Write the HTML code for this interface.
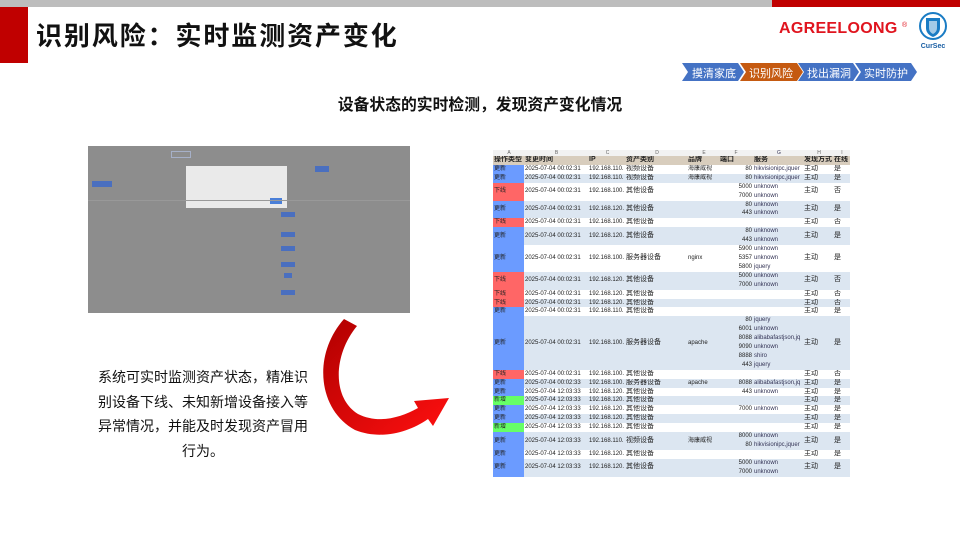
<!DOCTYPE html>
<html><head><meta charset="utf-8"><style>
*{margin:0;padding:0;box-sizing:border-box}
body{width:960px;height:540px;overflow:hidden;background:#fff;position:relative;font-family:"Liberation Sans","Noto Sans CJK SC",sans-serif}
.abs{position:absolute}
.tbl{position:absolute;left:493px;top:150px;width:357px;font-size:6px;line-height:8.9px;color:#222}
.r{display:flex;width:357px}
.r>div{overflow:hidden;white-space:nowrap;display:flex;flex-direction:column;justify-content:center;line-height:8.9px}
.c1{width:31px;padding-left:1px}.c2{width:64px;padding-left:1px}.c3{width:38px;padding-left:1px}.c4{width:62px;font-size:7px}.c5{width:32px}.c6{width:32px;text-align:right;align-items:flex-end}.c7{width:52px;padding-left:2px;color:#335}.c8{width:30px;font-size:7px}.c9{width:16px;font-size:7px}
.alt{background:#dce6f1}
.u{background:#6b9bff}.x{background:#ff6666}.n{background:#66ff66}
</style></head><body>
<div class="abs" style="left:0;top:0;width:772px;height:7px;background:#bdbdbd"></div>
<div class="abs" style="left:772px;top:0;width:188px;height:7px;background:#c00000"></div>
<div class="abs" style="left:0;top:7px;width:28px;height:56px;background:#c00000"></div>
<div class="abs" style="left:36px;top:18px;font-size:26px;letter-spacing:1.9px;font-weight:bold;color:#111;line-height:36px">识别风险：实时监测资产变化</div>
<div class="abs" style="left:779px;top:20px;font-size:16px;font-weight:bold;color:#e0141e;letter-spacing:0.3px">AGREELOONG</div>
<div class="abs" style="left:902px;top:22px;font-size:7px;color:#e0141e">®</div>
<svg class="abs" style="left:918px;top:11px" width="32" height="40" viewBox="0 0 32 40">
<circle cx="15" cy="15" r="13" fill="none" stroke="#1a7cc4" stroke-width="2"/>
<path d="M8,7 L22,7 L22,17 Q22,23 15,26 Q8,23 8,17 Z" fill="#1a7cc4"/>
<path d="M11,10 L19,10 L19,17 Q19,21 15,23 Q11,21 11,17 Z" fill="#fff" opacity=".6"/>
<text x="15" y="37" font-size="7" font-weight="bold" fill="#1a5fa4" text-anchor="middle" font-family="Liberation Sans">CurSec</text>
</svg>
<svg class="abs" style="left:680px;top:62px" width="240" height="20">
<polygon points="2,1 58,1 64,10 58,19 2,19 8,10" fill="#4472c4"/>
<polygon points="60,1 117,1 123,10 117,19 60,19 66,10" fill="#c55a11"/>
<polygon points="118,1 173,1 179,10 173,19 118,19 124,10" fill="#4472c4"/>
<polygon points="175,1 231,1 237,10 231,19 175,19 181,10" fill="#4472c4"/>
<g font-size="11" fill="#fff" font-family="Liberation Sans,Noto Sans CJK SC,sans-serif">
<text x="12" y="15">摸清家底</text><text x="69" y="15">识别风险</text><text x="127" y="15">找出漏洞</text><text x="184" y="15">实时防护</text></g>
</svg>
<div class="abs" style="left:0;width:960px;top:92px;text-align:center;font-size:15.8px;font-weight:bold;color:#111">设备状态的实时检测，发现资产变化情况</div>

<div class="abs" style="left:88px;top:146px;width:322px;height:167px;background:#8d8d8d"></div>
<div class="abs" style="left:93px;top:151px;width:310px;height:8px;">
<span class="abs" style="left:78px;top:0;width:20px;height:7px;border:1px solid #a6b0c8"></span></div>
<div class="abs" style="left:92px;top:181px;width:20px;height:6px;background:#4a6fbf"></div>
<div class="abs" style="left:315px;top:166px;width:14px;height:6px;background:#4a6fbf"></div>
<div class="abs" style="left:186px;top:166px;width:101px;height:42px;background:#eaeaea"></div>
<div class="abs" style="left:270px;top:198px;width:12px;height:6px;background:#4a7fd8"></div>
<div class="abs" style="left:88px;top:200px;width:322px;height:1px;background:#999"></div>
<div class="abs" style="left:281px;top:212px;width:14px;height:5px;background:#4a6fbf"></div>
<div class="abs" style="left:281px;top:232px;width:14px;height:5px;background:#4a6fbf"></div>
<div class="abs" style="left:281px;top:246px;width:14px;height:5px;background:#4a6fbf"></div>
<div class="abs" style="left:281px;top:262px;width:14px;height:5px;background:#4a6fbf"></div>
<div class="abs" style="left:284px;top:273px;width:8px;height:5px;background:#4a6fbf"></div>
<div class="abs" style="left:281px;top:290px;width:14px;height:5px;background:#4a6fbf"></div>

<svg class="abs" style="left:0;top:0" width="960" height="540">
<defs><linearGradient id="g" x1="0" y1="0" x2="1" y2="1"><stop offset="0" stop-color="#b00000"/><stop offset="1" stop-color="#ff1010"/></linearGradient></defs>
<path d="M344,319 L357,326 C333,355 332,398 358,414 C378,424 400,418 418,408 L414,401 L449,398 L433,426 L428,419 C408,433 380,440 355,430 C318,410 312,355 344,319 Z" fill="url(#g)"/>
</svg>
<div class="abs" style="left:96px;top:365px;width:214px;text-align:center;font-size:14px;line-height:24.5px;color:#111">系统可实时监测资产状态，精准识别设备下线、未知新增设备接入等异常情况，并能及时发现资产冒用行为。</div>

<div class="tbl">
<div class="r" style="font-size:5px;color:#666;text-align:center;background:#f2f2f2"><div class="c1" style="line-height:6px">A</div><div class="c2" style="line-height:6px">B</div><div class="c3" style="line-height:6px">C</div><div class="c4" style="font-size:5px;line-height:6px">D</div><div class="c5" style="line-height:6px">E</div><div class="c6" style="align-items:center;line-height:6px">F</div><div class="c7" style="line-height:6px">G</div><div class="c8" style="font-size:5px;line-height:6px">H</div><div class="c9" style="font-size:5px;line-height:6px">I</div></div>
<div class="r" style="background:#d8cdbd;font-weight:bold;font-size:7px"><div class="c1">操作类型</div><div class="c2">变更时间</div><div class="c3">IP</div><div class="c4">资产类别</div><div class="c5">品牌</div><div class="c6" style="text-align:left;align-items:flex-start">端口</div><div class="c7" style="color:#222">服务</div><div class="c8">发现方式</div><div class="c9">在线</div></div>
<div class="r"><div class="c1 u">更新</div><div class="c2">2025-07-04 00:02:31</div><div class="c3">192.168.110.</div><div class="c4">视频设备</div><div class="c5">海康威视</div><div class="c6">80</div><div class="c7">hikvisionipc,jquer</div><div class="c8">主动</div><div class="c9">是</div></div>
<div class="r alt"><div class="c1 u">更新</div><div class="c2">2025-07-04 00:02:31</div><div class="c3">192.168.110.</div><div class="c4">视频设备</div><div class="c5">海康威视</div><div class="c6">80</div><div class="c7">hikvisionipc,jquer</div><div class="c8">主动</div><div class="c9">是</div></div>
<div class="r"><div class="c1 x">下线</div><div class="c2">2025-07-04 00:02:31</div><div class="c3">192.168.100.</div><div class="c4">其他设备</div><div class="c5"></div><div class="c6">5000<br>7000</div><div class="c7">unknown<br>unknown</div><div class="c8">主动</div><div class="c9">否</div></div>
<div class="r alt"><div class="c1 u">更新</div><div class="c2">2025-07-04 00:02:31</div><div class="c3">192.168.120.</div><div class="c4">其他设备</div><div class="c5"></div><div class="c6">80<br>443</div><div class="c7">unknown<br>unknown</div><div class="c8">主动</div><div class="c9">是</div></div>
<div class="r"><div class="c1 x">下线</div><div class="c2">2025-07-04 00:02:31</div><div class="c3">192.168.100.</div><div class="c4">其他设备</div><div class="c5"></div><div class="c6"></div><div class="c7"></div><div class="c8">主动</div><div class="c9">否</div></div>
<div class="r alt"><div class="c1 u">更新</div><div class="c2">2025-07-04 00:02:31</div><div class="c3">192.168.120.</div><div class="c4">其他设备</div><div class="c5"></div><div class="c6">80<br>443</div><div class="c7">unknown<br>unknown</div><div class="c8">主动</div><div class="c9">是</div></div>
<div class="r"><div class="c1 u">更新</div><div class="c2">2025-07-04 00:02:31</div><div class="c3">192.168.100.</div><div class="c4">服务器设备</div><div class="c5">nginx</div><div class="c6">5900<br>5357<br>5800</div><div class="c7">unknown<br>unknown<br>jquery</div><div class="c8">主动</div><div class="c9">是</div></div>
<div class="r alt"><div class="c1 x">下线</div><div class="c2">2025-07-04 00:02:31</div><div class="c3">192.168.120.</div><div class="c4">其他设备</div><div class="c5"></div><div class="c6">5000<br>7000</div><div class="c7">unknown<br>unknown</div><div class="c8">主动</div><div class="c9">否</div></div>
<div class="r"><div class="c1 x">下线</div><div class="c2">2025-07-04 00:02:31</div><div class="c3">192.168.120.</div><div class="c4">其他设备</div><div class="c5"></div><div class="c6"></div><div class="c7"></div><div class="c8">主动</div><div class="c9">否</div></div>
<div class="r alt"><div class="c1 x">下线</div><div class="c2">2025-07-04 00:02:31</div><div class="c3">192.168.120.</div><div class="c4">其他设备</div><div class="c5"></div><div class="c6"></div><div class="c7"></div><div class="c8">主动</div><div class="c9">否</div></div>
<div class="r"><div class="c1 u">更新</div><div class="c2">2025-07-04 00:02:31</div><div class="c3">192.168.110.</div><div class="c4">其他设备</div><div class="c5"></div><div class="c6"></div><div class="c7"></div><div class="c8">主动</div><div class="c9">是</div></div>
<div class="r alt"><div class="c1 u">更新</div><div class="c2">2025-07-04 00:02:31</div><div class="c3">192.168.100.</div><div class="c4">服务器设备</div><div class="c5">apache</div><div class="c6">80<br>6001<br>8088<br>9090<br>8888<br>443</div><div class="c7">jquery<br>unknown<br>alibabafastjson,jq<br>unknown<br>shiro<br>jquery</div><div class="c8">主动</div><div class="c9">是</div></div>
<div class="r"><div class="c1 x">下线</div><div class="c2">2025-07-04 00:02:31</div><div class="c3">192.168.100.</div><div class="c4">其他设备</div><div class="c5"></div><div class="c6"></div><div class="c7"></div><div class="c8">主动</div><div class="c9">否</div></div>
<div class="r alt"><div class="c1 u">更新</div><div class="c2">2025-07-04 00:02:33</div><div class="c3">192.168.100.</div><div class="c4">服务器设备</div><div class="c5">apache</div><div class="c6">8088</div><div class="c7">alibabafastjson,jq</div><div class="c8">主动</div><div class="c9">是</div></div>
<div class="r"><div class="c1 u">更新</div><div class="c2">2025-07-04 12:03:33</div><div class="c3">192.168.120.</div><div class="c4">其他设备</div><div class="c5"></div><div class="c6">443</div><div class="c7">unknown</div><div class="c8">主动</div><div class="c9">是</div></div>
<div class="r alt"><div class="c1 n">新增</div><div class="c2">2025-07-04 12:03:33</div><div class="c3">192.168.120.</div><div class="c4">其他设备</div><div class="c5"></div><div class="c6"></div><div class="c7"></div><div class="c8">主动</div><div class="c9">是</div></div>
<div class="r"><div class="c1 u">更新</div><div class="c2">2025-07-04 12:03:33</div><div class="c3">192.168.120.</div><div class="c4">其他设备</div><div class="c5"></div><div class="c6">7000</div><div class="c7">unknown</div><div class="c8">主动</div><div class="c9">是</div></div>
<div class="r alt"><div class="c1 u">更新</div><div class="c2">2025-07-04 12:03:33</div><div class="c3">192.168.120.</div><div class="c4">其他设备</div><div class="c5"></div><div class="c6"></div><div class="c7"></div><div class="c8">主动</div><div class="c9">是</div></div>
<div class="r"><div class="c1 n">新增</div><div class="c2">2025-07-04 12:03:33</div><div class="c3">192.168.120.</div><div class="c4">其他设备</div><div class="c5"></div><div class="c6"></div><div class="c7"></div><div class="c8">主动</div><div class="c9">是</div></div>
<div class="r alt"><div class="c1 u">更新</div><div class="c2">2025-07-04 12:03:33</div><div class="c3">192.168.110.</div><div class="c4">视频设备</div><div class="c5">海康威视</div><div class="c6">8000<br>80</div><div class="c7">unknown<br>hikvisionipc,jquer</div><div class="c8">主动</div><div class="c9">是</div></div>
<div class="r"><div class="c1 u">更新</div><div class="c2">2025-07-04 12:03:33</div><div class="c3">192.168.120.</div><div class="c4">其他设备</div><div class="c5"></div><div class="c6"></div><div class="c7"></div><div class="c8">主动</div><div class="c9">是</div></div>
<div class="r alt"><div class="c1 u">更新</div><div class="c2">2025-07-04 12:03:33</div><div class="c3">192.168.120.</div><div class="c4">其他设备</div><div class="c5"></div><div class="c6">5000<br>7000</div><div class="c7">unknown<br>unknown</div><div class="c8">主动</div><div class="c9">是</div></div>
</div>
</body></html>
